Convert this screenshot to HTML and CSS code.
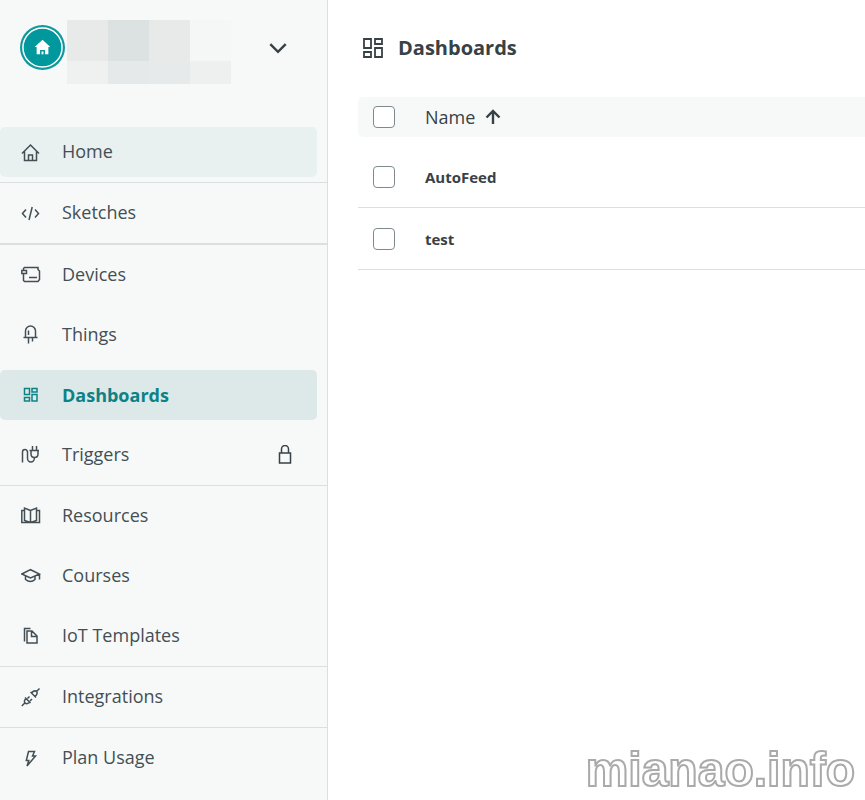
FILE: index.html
```html
<!DOCTYPE html>
<html lang="en">
<head>
<meta charset="utf-8">
<meta name="viewport" content="width=device-width, initial-scale=1">
<title>Dashboards</title>
<link rel="stylesheet" href="styles.css">
</head>
<body>
<div class="app">
  <aside class="sidebar">
    <header class="account">
      <svg class="avatar" viewBox="0 0 46 46" aria-hidden="true">
        <circle cx="23" cy="23" r="23" fill="#11989d"/>
        <circle cx="23" cy="23" r="20" fill="#00979d" stroke="#fff" stroke-width="1.5"/>
        <path d="M23 15l8 7.500h-2V30h-3.500v-4.500h-5V30H17v-7.500h-2z" fill="#fff"/>
        <path d="M22 27h2v3h-2z" fill="#fff"/>
      </svg>
      <div class="mosaic" aria-hidden="true">
        <i class="t1"></i><i class="t2"></i><i class="t3"></i><i class="t4"></i>
        <i class="t5"></i><i class="t6"></i><i class="t7"></i><i class="t8"></i>
      </div>
      <button class="switch" type="button" aria-label="Switch space">
        <svg viewBox="0 0 20 20"><path d="M3 6.500l7 7 7-7" stroke-width="2.2"/></svg>
      </button>
    </header>
    <nav>
      <div class="group">
        <a class="item hover" href="#"><svg viewBox="0 0 20 20"><path d="M1 11.500l8.500-8.500 8.500 8.500M3.500 9.500v9h12v-9M7.500 18.500v-5.500h4v5.500"/></svg><span>Home</span></a>
      </div>
      <div class="group thick">
        <a class="item" href="#"><svg viewBox="0 0 20 20"><path d="M5 6.500L1.500 10.500l3.500 4M14 6.500l3.500 4-3.500 4M11.200 4L8 17"/></svg><span>Sketches</span></a>
      </div>
      <div class="group">
        <a class="item" href="#"><svg viewBox="0 0 20 20"><path d="M2.500 5.500v-2l1-1h13.500v2l1.500 1.500v8.500l-1.500 2H3.500l-1-1V8.500M.8 5.500h4.700v3H.8zM8 12.500h8"/></svg><span>Devices</span></a>
        <a class="item" href="#"><svg viewBox="0 0 20 20"><path d="M4.500 12.500V6a5 5 0 0 1 10 0v6.500M2.500 12.500h14M7.500 12.500v6M11.500 12.500v4M7.500 5.500v4.500"/></svg><span>Things</span></a>
        <a class="item current" href="#" aria-current="page"><svg viewBox="0 0 20 20"><path d="M3.500 3.500h5v6h-5zM11 3.500h5v3.500h-5zM3.500 12.500h5v3.500h-5zM11 9.500h5v6.500h-5z"/></svg><span>Dashboards</span></a>
        <a class="item" href="#"><svg viewBox="0 0 20 20"><path d="M1.500 17.500V7a2.500 2.500 0 0 1 5 0v6.500a3.400 3.400 0 0 0 6.800 0V12M8.500 5.500h9.500M11.500 1v4.500M15.500 1v4.500M10 5.500v3.500c0 2 1.500 3.500 3.500 3.500s3.500-1.500 3.500-3.500V5.500"/></svg><span>Triggers</span><svg class="lock" viewBox="0 0 20 20"><path d="M4.500 8h11v10h-11zM6.500 8V4a3.500 3.500 0 0 1 7 0v4"/></svg></a>
      </div>
      <div class="group">
        <a class="item" href="#"><svg viewBox="0 0 20 20"><path d="M3.500 4.500H.8v12h17.700v-12h-3M9.500 4.500L3.500 2v12.500l6 2 6-2V2zM9.500 4.500v12"/></svg><span>Resources</span></a>
        <a class="item" href="#"><svg viewBox="0 0 20 20"><path d="M.8 8l8.700-4.300L18.500 8l-9 4zM4.500 10v3.500q5 4 9.500 0V10M18.500 8v5.500"/></svg><span>Courses</span></a>
        <a class="item" href="#"><svg viewBox="0 0 20 20"><path d="M3.500 15.500V2.500h6M6 5h5l5 5v7H6zM10.500 5v5.500H16"/></svg><span>IoT Templates</span></a>
      </div>
      <div class="group">
        <a class="item" href="#"><svg viewBox="0 0 20 20"><path d="M.8 19l3-3M4 10.500l5.500 5.500M5 11.500c-2 2-2 3.500-.8 4.500 1 1 2.500 1 4.500-1M6.500 11.500l2-2M9 14l2-2M18.500 1.500l-3 3M9.500 5l5.500 5.500M10.500 5.800c2-2 3.800-2.300 5-1.300 1 1.200.7 3-1.300 5"/></svg><span>Integrations</span></a>
      </div>
      <div class="group last">
        <a class="item" href="#"><svg viewBox="0 0 20 20"><path d="M7.500 3.500h6l-2 4.500h3L6 18l1.800-5.500H5.300z"/></svg><span>Plan Usage</span></a>
      </div>
    </nav>
  </aside>
  <main class="content">
    <h1 class="title">
      <svg viewBox="0 0 20 20" aria-hidden="true"><path d="M1 1h7v9H1zM12 1h7v5h-7zM1 14h7v5H1zM12 10h7v9h-7z"/></svg>
      <span>Dashboards</span>
    </h1>
    <table class="list">
      <thead>
        <tr>
          <th class="pick" scope="col"><input type="checkbox" aria-label="Select all"></th>
          <th scope="col"><button class="sort" type="button">Name <svg viewBox="0 0 16 16" aria-hidden="true"><path d="M8 15V2M1.500 8.500L8 2l6.500 6.500"/></svg></button></th>
        </tr>
      </thead>
      <tbody>
        <tr>
          <td class="pick"><input type="checkbox" id="row-autofeed"></td>
          <td><label for="row-autofeed">AutoFeed</label></td>
        </tr>
        <tr>
          <td class="pick"><input type="checkbox" id="row-test"></td>
          <td><label for="row-test">test</label></td>
        </tr>
      </tbody>
    </table>
  </main>
</div>
<div class="watermark">mianao.info</div>
</body>
</html>
```
FILE: styles.css
```css
* {
  box-sizing: border-box;
}

body {
  margin: 0;
  background: #fff;
  color: #374146;
  font-family: "Open Sans", "Noto Sans", sans-serif;
  font-size: 18px;
  line-height: 24px;
}

svg {
  flex: none;
  fill: none;
  stroke: currentColor;
}

.app {
  display: flex;
  min-height: 100vh;
}

.sidebar {
  flex: none;
  width: 328px;
  background: #f7f9f9;
  border-right: 1px solid #dae0e1;
}

.account {
  display: flex;
  align-items: flex-start;
  height: 122px;
  padding: 20px 38px 0 20px;
}

.avatar {
  width: 45px;
  height: 45px;
  margin-top: 5px;
  stroke: none;
}

.mosaic {
  display: grid;
  grid-template-columns: repeat(4, 41px);
  grid-template-rows: 41px 23px;
  margin-left: 2px;
}

.t1 { background: #e8eaea; }
.t2 { background: #dce1e2; }
.t3 { background: #e8eaea; }
.t4 { background: #f5f7f7; }
.t5 { background: #eff1f1; }
.t6 { background: #e6e9e9; }
.t7 { background: #e7eaea; }
.t8 { background: #eef0f0; }

.switch {
  display: flex;
  margin: 17px 0 0 auto;
  padding: 0;
  border: 0;
  background: none;
  color: #374146;
}

.switch svg {
  width: 22px;
  height: 22px;
}

.group {
  display: grid;
  gap: 10px;
  padding: 5px 0;
  border-bottom: 1px solid #dae0e1;
}

.group.thick {
  border-bottom-width: 2px;
}

.group.last {
  border-bottom: 0;
}

.item {
  display: flex;
  align-items: center;
  gap: 21px;
  height: 50px;
  margin-right: 10px;
  padding: 0 22px 0 21px;
  border-radius: 5px;
  color: #434f54;
  text-decoration: none;
}

.item span {
  padding-bottom: 2px;
}

.item svg {
  width: 20px;
  height: 20px;
  stroke-width: 1.5;
}

.item .lock {
  margin-left: auto;
  color: #374146;
}

.hover {
  background: #e9f0f0;
}

.current {
  background: #dde8e8;
  color: #0c8286;
  font-weight: 700;
}

.current span {
  padding-bottom: 0;
}

.content {
  flex: 1;
  min-width: 0;
  padding: 36px 0 0 30px;
}

.title {
  display: flex;
  align-items: center;
  gap: 15px;
  margin: 0 0 37px;
  padding-left: 5px;
  font-size: 20px;
  line-height: 24px;
}

.title svg {
  width: 20px;
  height: 20px;
  stroke-width: 1.8;
}

.list {
  width: 100%;
  border-collapse: separate;
  border-spacing: 0;
}

.list th,
.list td {
  padding: 0;
  text-align: left;
  vertical-align: middle;
}

.list th {
  height: 40px;
  background: #f7f9f9;
}

.list th:first-child {
  border-radius: 5px 0 0 5px;
}

.list tbody::before {
  content: "";
  display: block;
  height: 9px;
}

.list td {
  height: 62px;
  border-bottom: 1px solid #dadfe0;
  font-size: 15px;
  font-weight: 700;
}

.list .pick {
  width: 67px;
  padding-left: 15px;
}

input[type="checkbox"] {
  display: block;
  appearance: none;
  width: 22px;
  height: 22px;
  margin: 0;
  border: 1px solid #7f8a8e;
  border-radius: 4px;
  background: #fff;
}

input[type="checkbox"]:checked {
  background: #0c8286;
}

.sort {
  display: flex;
  align-items: center;
  gap: 10px;
  padding: 0 0 1px;
  border: 0;
  background: none;
  color: inherit;
  font: inherit;
  font-weight: 500;
}

.sort svg {
  width: 16px;
  height: 16px;
  stroke-width: 2.4;
}

.watermark {
  position: fixed;
  right: 10px;
  bottom: 3px;
  color: #fff;
  font: 700 48px/54px "Liberation Sans", Arial, sans-serif;
  -webkit-text-stroke: 2px #aaa;
  text-shadow: 0 0 1px #999;
  pointer-events: none;
}
```
